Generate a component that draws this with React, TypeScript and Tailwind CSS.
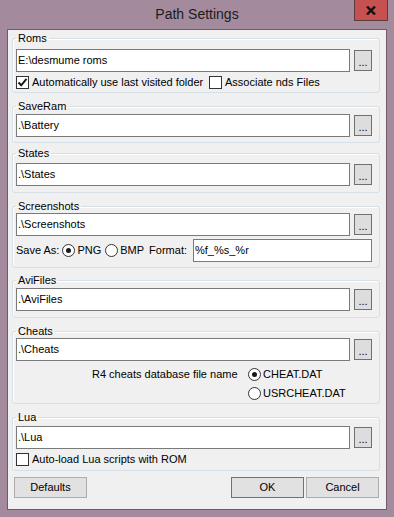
import type { ReactNode } from "react";

function CheckBox({ checked }: { checked?: boolean }) {
  return (
    <span className="w-[13px] h-[13px] shrink-0 border border-[#333333] bg-white flex items-center justify-center">
      {checked && (
        <svg width="11" height="11" viewBox="0 0 11 11">
          <path d="M1.5 5.5 L4.2 8.3 L9.5 1.8" fill="none" stroke="#1a1a1a" strokeWidth="2" />
        </svg>
      )}
    </span>
  );
}

function Radio({ checked }: { checked?: boolean }) {
  return (
    <span className="w-[13px] h-[13px] shrink-0 rounded-full border border-[#333333] bg-white flex items-center justify-center">
      {checked && <span className="w-[5px] h-[5px] rounded-full bg-[#1a1a1a]" />}
    </span>
  );
}

function TextBox({ value }: { value: string }) {
  return (
    <div className="flex-1 h-[23px] border border-[#7a7a7a] bg-white pl-[1px] flex items-center whitespace-pre">
      {value}
    </div>
  );
}

function Browse() {
  return (
    <button className="w-[18px] h-[21px] shrink-0 border border-[#707070] bg-[#dddddd] flex items-end justify-center pb-[2px] leading-none text-[11px]">
      ...
    </button>
  );
}

function PathRow({ value }: { value: string }) {
  return (
    <div className="flex items-center gap-[4px]">
      <TextBox value={value} />
      <Browse />
    </div>
  );
}

function Group({ title, className, children }: { title: string; className: string; children: ReactNode }) {
  return (
    <fieldset
      className={`ml-[4px] mr-[6px] pl-[3px] pr-[7px] border border-[#d5dfe5] rounded-[3px] shadow-[inset_1px_1px_0_#ffffff] ${className}`}
    >
      <legend className="px-[2px] leading-[14px]">{title}</legend>
      {children}
    </fieldset>
  );
}

function DlgButton({ label, primary }: { label: string; primary?: boolean }) {
  return (
    <button
      className={`w-[73px] h-[21px] bg-[#e1e1e1] border flex items-center justify-center ${
        primary ? "border-[#3c7fb1]" : "border-[#adadad]"
      }`}
    >
      {label}
    </button>
  );
}

export default function App() {
  return (
    <div className="w-[394px] h-[517px] bg-[#a38b9d] flex flex-col font-['Liberation_Sans',Arial,sans-serif]">
      {/* title bar */}
      <div className="relative h-[29px] shrink-0 flex items-center justify-center text-[14px] text-[#1b1b1b]">
        Path Settings
        <div className="absolute right-[6px] top-0 w-[34px] h-[21px] bg-[#c75050] border border-t-0 border-[#5e3b3b] flex items-center justify-center">
          <svg width="10" height="9" viewBox="0 0 10 9">
            <path d="M1 0.5 L9 8.5 M9 0.5 L1 8.5" stroke="#111111" strokeWidth="2.4" />
          </svg>
        </div>
      </div>

      {/* client area */}
      <div className="flex-1 mx-[7px] mb-[7px] border border-[#6e5a69] bg-[#f0f0f0] flex flex-col text-[11px] text-black">
        <Group title="Roms" className="mt-[1px] pt-[4px] pb-[3px]">
          <PathRow value="E:\desmume roms" />
          <div className="mt-[3px] h-[14px] flex items-center">
            <div className="w-[193px] flex items-center gap-[3px]">
              <CheckBox checked />
              <span>Automatically use last visited folder</span>
            </div>
            <div className="flex items-center gap-[3px]">
              <CheckBox />
              <span>Associate nds Files</span>
            </div>
          </div>
        </Group>

        <Group title="SaveRam" className="mt-[6px] pt-[1px] pb-[5px]">
          <PathRow value=".\Battery" />
        </Group>

        <Group title="States" className="mt-[3px] pt-[3px] pb-[6px]">
          <PathRow value=".\States" />
        </Group>

        <Group title="Screenshots" className="mt-[6px] pt-0 pb-[5px]">
          <PathRow value=".\Screenshots" />
          <div className="mt-[3px] h-[23px] flex items-center">
            <span>Save As:</span>
            <span className="ml-[3px]">
              <Radio checked />
            </span>
            <span className="ml-[2px]">PNG</span>
            <span className="ml-[4px]">
              <Radio />
            </span>
            <span className="ml-[2px]">BMP</span>
            <span className="ml-[5px]">Format:</span>
            <div className="ml-[6px] flex-1 flex">
              <TextBox value="%f_%s_%r" />
            </div>
          </div>
        </Group>

        <Group title="AviFiles" className="mt-[5px] pt-[1px] pb-[6px]">
          <PathRow value=".\AviFiles" />
        </Group>

        <Group title="Cheats" className="mt-[6px] pt-0 pb-[3px]">
          <PathRow value=".\Cheats" />
          <div className="mt-[6px] h-[14px] flex items-center">
            <span className="ml-[76px] w-[156px]">R4 cheats database file name</span>
            <Radio checked />
            <span className="ml-[2px]">CHEAT.DAT</span>
          </div>
          <div className="mt-[5px] h-[14px] flex items-center">
            <span className="ml-[232px]">
              <Radio />
            </span>
            <span className="ml-[2px]">USRCHEAT.DAT</span>
          </div>
        </Group>

        <Group title="Lua" className="mt-[6px] pt-[2px] pb-[4px]">
          <PathRow value=".\Lua" />
          <div className="mt-[3px] h-[14px] flex items-center gap-[3px]">
            <CheckBox />
            <span>Auto-load Lua scripts with ROM</span>
          </div>
        </Group>

        <div className="mt-[6px] flex items-center pl-[6px] pr-[7px]">
          <DlgButton label="Defaults" />
          <div className="ml-auto flex gap-[2px]">
            <DlgButton label="OK" primary />
            <DlgButton label="Cancel" />
          </div>
        </div>
      </div>
    </div>
  );
}
